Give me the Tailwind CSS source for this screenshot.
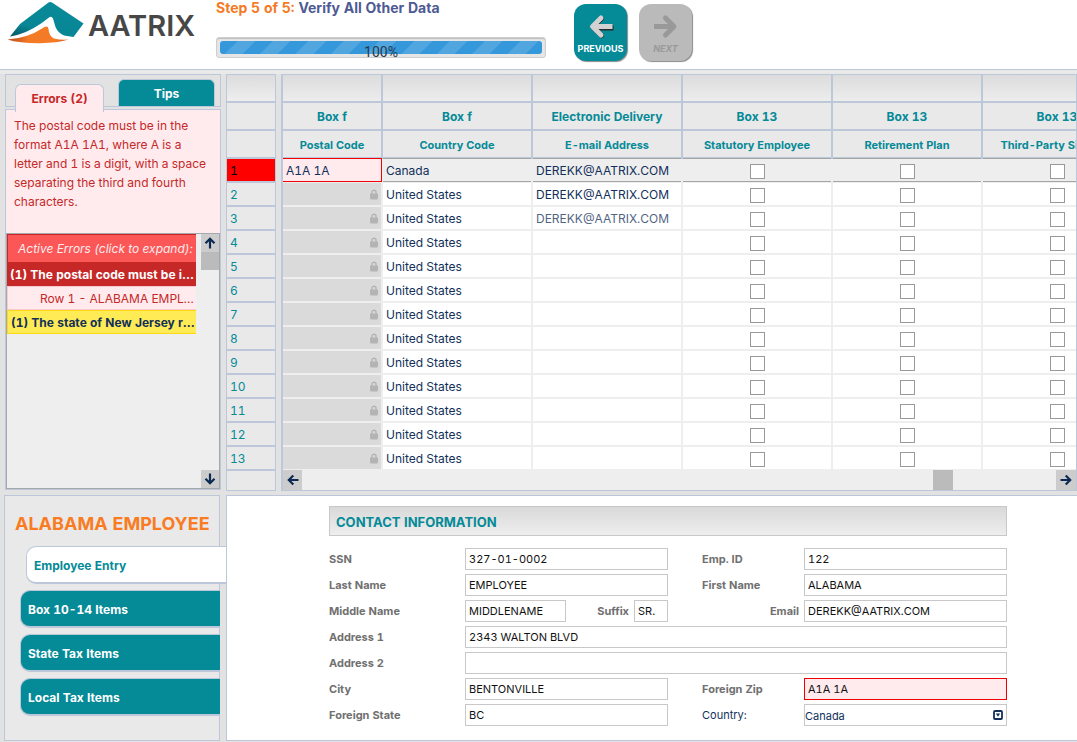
<!DOCTYPE html>
<html lang="en">
<head>
<meta charset="utf-8">
<title>Aatrix - Verify All Other Data</title>
<script src="https://cdn.jsdelivr.net/npm/@tailwindcss/browser@4"></script>
</head>
<body class="flex min-h-screen flex-col overflow-x-hidden bg-[#e2e2e2] font-['Inter',sans-serif] text-xs text-[#12305a] tabular-nums">

<header class="flex h-[70px] shrink-0 border-b border-[#bcc8da] bg-white">
  <div class="flex w-[216px] shrink-0">
    <svg class="ml-[6px] h-[48px] w-[80px] shrink-0" viewBox="6 0 80 48" aria-hidden="true">
      <defs>
        <linearGradient id="teal" x1="0" y1="1" x2="0.5" y2="0"><stop offset="0" stop-color="#04525f"/><stop offset="0.35" stop-color="#078796"/><stop offset="1" stop-color="#0a8a99"/></linearGradient>
        <linearGradient id="orange" x1="0" y1="0.5" x2="1" y2="0.5"><stop offset="0" stop-color="#b8481c"/><stop offset="0.35" stop-color="#f47b26"/><stop offset="0.8" stop-color="#f47b26"/><stop offset="1" stop-color="#c9531d"/></linearGradient>
      </defs>
      <path fill="url(#teal)" d="M10 36.5 L20 24 L48.500 2.600 Q50 1.500 52 2.600 L83.500 23.500 L73.500 37 L64 35.500 Q58 33 55.500 27 L53 18.500 Q51.500 15.500 49 17.500 L41 23.500 Q26 34 10 36.500Z"/>
      <path fill="url(#orange)" d="M7.500 39.500 Q28 38 42 28.500 Q48 24.500 48.500 29 Q49 36 54 38.500 Q60 40 68.500 39.600 Q58 43 40 43.300 Q20 43.500 7.500 39.500Z"/>
    </svg>
    <span class="mt-[10px] ml-[2px] text-[29px] leading-8 font-semibold text-[#474747]">AATRIX</span>
  </div>
  <div class="w-[330px] shrink-0">
    <h1 class="text-[14px] leading-4 font-bold text-[#4e5a94]"><span class="text-[#f47b26]">Step 5 of 5:</span> Verify All Other Data</h1>
    <div role="progressbar" aria-valuenow="100" aria-valuemin="0" aria-valuemax="100" class="relative mt-[21px] h-[21px] rounded-[3px] border border-[#cfcfcf] bg-[#e6e6e6] p-[3px] shadow-[inset_0_1px_1px_#bdbdbd]">
      <div class="h-[13px] rounded-[3px] bg-[repeating-linear-gradient(135deg,#3498db_0,#3498db_12px,#52a6e0_13px,#52a6e0_25px)]"></div>
      <span class="absolute inset-x-0 top-[6px] text-center font-['Roboto',sans-serif] text-sm leading-4 text-[#26384a]">100%</span>
    </div>
  </div>
  <nav class="ml-[28px] flex gap-3 pt-1">
    <button class="flex h-[57px] w-[53px] flex-col items-center justify-end gap-[3px] rounded-xl bg-[#058a98] pb-[6px] text-[9px] leading-3 font-bold text-white shadow-[1px_1px_1px_#8a8a8a]">
      <svg class="h-[26px] w-[28px]" viewBox="0 0 28 26" fill="none" stroke-linecap="round" stroke-linejoin="round" stroke-width="5"><path stroke="#2b2b2b" d="M14.500 4.500 L6 13 L14.500 21.500"/><path stroke="#2b2b2b" stroke-linecap="butt" d="M8 14 H26.500"/><path stroke="#d2d2d2" d="M14 4 L5.500 12.500 L14 21"/><path stroke="#d2d2d2" stroke-linecap="butt" d="M7 12.500 H25.500"/></svg>
      PREVIOUS</button>
    <button disabled class="flex h-[57px] w-[53px] flex-col items-center justify-end gap-[3px] rounded-xl bg-[#bababa] pb-[6px] text-[9px] leading-3 font-bold text-[#999] italic shadow-[1px_1px_1px_#8a8a8a]">
      <svg class="h-[26px] w-[28px]" viewBox="0 0 28 26" fill="none" stroke="#999" stroke-linecap="round" stroke-linejoin="round" stroke-width="5"><path d="M13.500 4 L22 12.500 L13.500 21"/><path stroke-linecap="butt" d="M2 12.500 H20.500"/></svg>
      NEXT</button>
  </nav>
</header>

<main class="flex grow flex-col">
  <section class="flex h-[425px] shrink-0 border-t-4 border-[#e9e9e9] bg-[#e2e2e2]">
    <aside class="ml-[5px] flex w-[216px] shrink-0 flex-col pb-[5px]">
      <div role="tablist" class="flex h-[33px] shrink-0 items-start border border-[#bcc8da]">
        <button role="tab" aria-selected="true" class="z-10 mt-[9px] ml-[9px] h-[28px] w-[89px] shrink-0 rounded-t-md border border-b-0 border-[#bcc8da] bg-[#ffebee] text-[12px] font-bold text-[#c62828]">Errors (2)</button>
        <button role="tab" aria-selected="false" class="mt-[4px] ml-[14px] h-[27px] w-[97px] shrink-0 rounded-t-md border border-b-0 border-[#bcc8da] bg-[#058a98] pt-[2px] text-[12px] font-bold text-white">Tips</button>
      </div>
      <div class="mt-[2px] flex grow flex-col border border-[#bcc8da] bg-[#ffebee]">
        <p class="h-[123px] px-2 pt-[6px] text-[12px] leading-[19px] text-[#c62828]">The postal code must be in the format A1A 1A1, where A is a letter and 1 is a digit, with a space separating the third and fourth characters.</p>
        <div class="flex grow border border-l-0 border-[#a5a8ac] bg-[#eee]">
          <ul class="w-[190px] shrink-0 border-l border-[#a5a8ac]">
            <li class="h-[28px] truncate border-t border-l border-[#c62828] bg-[#fa5756] pl-[10px] text-[12px] leading-[28px] text-[#ffebee] italic">Active Errors (click to expand):</li>
            <li class="h-6 truncate bg-[#c62828] pl-[3px] text-[12px] leading-[26px] font-bold text-white">(1) The postal code must be in the</li>
            <li class="h-6 truncate border border-r-0 border-[#f9c9cf] bg-[#ffebee] pl-8 text-[12px] leading-6 text-[#c62828]">Row 1 - ALABAMA EMPLOYEE</li>
            <li class="h-6 truncate border border-r-0 border-[#fbd913] bg-[#ffeb55] pl-[3px] text-[12px] leading-6 font-bold">(1) The state of New Jersey requires</li>
          </ul>
          <div class="ml-auto flex w-[18px] flex-col bg-[#eee]">
            <button aria-label="Scroll up" class="flex h-[18px] items-center justify-center bg-[#ccc]"><svg class="h-3 w-3" viewBox="0 0 12 12" fill="none" stroke="#0b2a52" stroke-width="2.200"><path d="M6 11.500 V2 M1.500 6.300 L6 1.800 L10.500 6.300"/></svg></button>
            <div class="h-[18px] bg-[#bbb]"></div>
            <button aria-label="Scroll down" class="mt-auto flex h-[18px] items-center justify-center bg-[#ccc]"><svg class="h-3 w-3" viewBox="0 0 12 12" fill="none" stroke="#0b2a52" stroke-width="2.200"><path d="M6 0.500 V10 M1.500 5.700 L6 10.200 L10.500 5.700"/></svg></button>
          </div>
        </div>
      </div>
    </aside>

    <div class="ml-[5px] w-[50px] shrink-0 self-start border border-[#bcc8da] bg-[#e9e9e9]">
      <div class="h-[28px] border-b-2 border-[#bcc8da] bg-linear-to-b from-[#dcdcdc] to-[#eee]"></div>
      <div class="h-[28px] border-b-2 border-[#bcc8da]"></div>
      <div class="h-[28px] border-b-2 border-[#bcc8da]"></div>
      <ol id="numbers" class="text-[12px] leading-5 text-[#058a98]"></ol>
      <div class="h-[19px]"></div>
    </div>

    <div class="ml-[5px] flex min-w-0 grow flex-col self-start overflow-hidden border border-l-2 border-[#bcc8da] bg-[#eee]">
      <div class="overflow-hidden">
        <table class="w-[850px] table-fixed border-separate border-spacing-0 leading-5">
          <colgroup><col class="w-[100px]"><col class="w-[150px]"><col class="w-[150px]"><col class="w-[150px]"><col class="w-[150px]"><col class="w-[150px]"></colgroup>
          <thead class="bg-[#e9e9e9] text-[#058a98]">
            <tr class="h-[28px] bg-linear-to-b from-[#dcdcdc] to-[#eee] *:border-r-2 *:border-b-2 *:border-[#bcc8da] *:p-0"><td></td><td></td><td></td><td></td><td></td><td></td></tr>
            <tr class="h-[28px] text-[12px] *:border-r-2 *:border-b-2 *:border-[#bcc8da] *:px-0 *:pt-[2px] *:pb-0 *:font-bold"><th>Box f</th><th>Box f</th><th>Electronic Delivery</th><th>Box 13</th><th>Box 13</th><th>Box 13</th></tr>
            <tr class="h-[28px] text-[11px] *:border-r-2 *:border-b-2 *:border-[#bcc8da] *:px-0 *:pt-[2px] *:pb-0 *:font-bold"><th>Postal Code</th><th>Country Code</th><th>E-mail Address</th><th>Statutory Employee</th><th>Retirement Plan</th><th>Third-Party Sick Pay</th></tr>
          </thead>
          <tbody id="rows" class="text-[12px]"></tbody>
        </table>
      </div>
      <div class="-mt-px flex h-5">
        <button aria-label="Scroll left" class="flex w-[19px] items-center justify-center bg-[#ccc]"><svg class="h-3 w-3" viewBox="0 0 12 12" fill="none" stroke="#0b2a52" stroke-width="2.200"><path d="M11.500 6 H2 M6.300 1.500 L1.800 6 L6.300 10.500"/></svg></button>
        <div class="flex-[631]"></div>
        <div class="w-5 bg-[#bbb]"></div>
        <div class="flex-[103]"></div>
        <button aria-label="Scroll right" class="flex w-5 items-center justify-center bg-[#ccc]"><svg class="h-3 w-3" viewBox="0 0 12 12" fill="none" stroke="#0b2a52" stroke-width="2.200"><path d="M0.500 6 H10 M5.700 1.500 L10.200 6 L5.700 10.500"/></svg></button>
      </div>
    </div>
  </section>

  <section class="flex grow pb-px">
    <aside class="ml-1 w-[216px] shrink-0 border border-[#bcc8da] bg-[#e9e9e9]">
      <h2 class="mt-4 ml-[10px] text-[18px] leading-6 font-bold whitespace-nowrap text-[#f97b22]">ALABAMA EMPLOYEE</h2>
      <nav class="mt-[10px] ml-[15px] flex flex-col gap-[6px] text-[12px] font-bold">
        <button class="z-10 -mr-[7px] ml-[6px] h-[38px] rounded-l-[10px] border border-r-0 border-b-2 border-[#bcc8da] bg-white pt-[2px] pl-[7px] text-left text-[#058a98]">Employee Entry</button>
        <button class="-mr-px h-[38px] rounded-l-[10px] border border-r-0 border-b-2 border-[#bcc8da] bg-[#058a98] pt-[2px] pl-[7px] text-left text-white">Box 10-14 Items</button>
        <button class="-mr-px h-[38px] rounded-l-[10px] border border-r-0 border-b-2 border-[#bcc8da] bg-[#058a98] pt-[2px] pl-[7px] text-left text-white">State Tax Items</button>
        <button class="-mr-px h-[38px] rounded-l-[10px] border border-r-0 border-b-2 border-[#bcc8da] bg-[#058a98] pt-[2px] pl-[7px] text-left text-white">Local Tax Items</button>
      </nav>
    </aside>

    <form class="ml-[6px] min-w-0 grow border border-r-0 border-[#bcc8da] bg-white pt-[10px] pr-[70px] pl-[102px] text-[11px] text-[#111]">
      <h3 class="h-[30px] border border-[#c8c8c8] bg-linear-to-b from-[#d9d9d9] to-[#eee] pl-[6px] text-[13px] leading-[31px] font-bold text-[#058a98]">CONTACT INFORMATION</h3>
      <div class="mt-3 grid grid-cols-[136px_1fr_34px_102px_1fr] gap-y-1 leading-[22px] [&_input]:h-[22px] [&_input]:min-w-0 [&_input]:border [&_input]:px-[3px] [&_label]:font-bold [&_label]:text-[#707070]">
        <label for="ssn">SSN</label><input id="ssn" class="border-[#c8c8c8]" value="327-01-0002">
        <label for="emp" class="col-start-4">Emp. ID</label><input id="emp" class="border-[#c8c8c8]" value="122">
        <label for="last">Last Name</label><input id="last" class="border-[#c8c8c8]" value="EMPLOYEE">
        <label for="first" class="col-start-4">First Name</label><input id="first" class="border-[#c8c8c8]" value="ALABAMA">
        <label for="middle">Middle Name</label>
        <div class="flex"><input id="middle" class="w-[101px] border-[#c8c8c8]" value="MIDDLENAME"><label for="suffix" class="mr-[5px] ml-auto">Suffix</label><input id="suffix" class="w-[34px] border-[#c8c8c8]" value="SR."></div>
        <label for="email" class="col-start-4 pr-[5px] text-right">Email</label><input id="email" class="border-[#c8c8c8]" value="DEREKK@AATRIX.COM">
        <label for="a1">Address 1</label><input id="a1" class="col-span-4 border-[#c8c8c8]" value="2343 WALTON BLVD">
        <label for="a2">Address 2</label><input id="a2" class="col-span-4 border-[#c8c8c8]">
        <label for="city">City</label><input id="city" class="border-[#c8c8c8]" value="BENTONVILLE">
        <label for="zip" class="col-start-4">Foreign Zip</label><input id="zip" aria-invalid="true" class="border-[#f00000] bg-[#ffebee]" value="A1A 1A">
        <label for="state">Foreign State</label><input id="state" class="border-[#c8c8c8]" value="BC">
        <label for="country" class="col-start-4"><span class="font-normal text-[#12305a]">Country:</span></label>
        <div class="relative">
          <select id="country" class="h-[22px] w-full appearance-none border border-[#c8c8c8] bg-white text-[#12305a]"><option>Canada</option><option>United States</option></select>
          <svg class="pointer-events-none absolute top-[6px] right-1 h-[10px] w-[10px]" viewBox="0 0 10 10"><rect x="1" y="1" width="8" height="8" rx="1" fill="#fff" stroke="#12305a" stroke-width="1.800"/><path d="M2.800 3.600 H7.200 L5 6.800Z" fill="#12305a"/></svg>
        </div>
      </div>
    </form>
  </section>
</main>

<script>
const lock = '<svg class="ml-auto mr-[3px] h-[11px] w-[8px]" viewBox="0 0 8 11"><path d="M2 5 V3.200 A2 2 0 0 1 6 3.200 V5" fill="none" stroke="#b4b4b4" stroke-width="1.400"/><rect y="4.600" width="8" height="5.800" rx="0.800" fill="#b4b4b4"/></svg>';
const emails = { 1: 'DEREKK@AATRIX.COM', 2: 'DEREKK@AATRIX.COM', 3: '<span class="opacity-75">DEREKK@AATRIX.COM</span>' };
let numbers = '', rows = '';
for (let n = 1; n <= 13; n++) {
  numbers += `<li class="h-6 border-b-2 border-[#bcc8da] ${n === 1 ? 'bg-[#f00] text-black' : ''} bg-clip-padding pt-[2px] pl-[3px]">${n}</li>`;
  const tone = n === 1 ? 'bg-[#eee] shadow-[0_1px_#a5a5a5,0_-1px_#a5a5a5]' : 'bg-white';
  const first = n === 1
    ? '<input aria-label="Postal Code, row 1" value="A1A 1A" class="relative block h-[22px] w-full bg-[#ffebee] px-[3px] outline outline-[#f00000]">'
    : `<div class="flex h-[22px] items-center bg-[#dadada]">${lock}</div>`;
  const box = name => `<td class="border-r-2 border-b-2 border-[#eee] p-0"><div class="flex h-[22px] items-end justify-center pb-[2px] pl-px ${tone}"><input type="checkbox" aria-label="${name}, row ${n}" class="h-[15px] w-[15px] appearance-none border border-[#999] bg-white"></div></td>`;
  rows += `<tr><td class="border-r-2 border-b-2 border-[#eee] p-0">${first}</td>`
    + `<td class="border-r-2 border-b-2 border-[#eee] p-0"><div class="h-[22px] pt-[2px] pl-[3px] ${tone}">${n === 1 ? 'Canada' : 'United States'}</div></td>`
    + `<td class="border-r-2 border-b-2 border-[#eee] p-0"><div class="h-[22px] pt-[2px] pl-[3px] ${tone}">${emails[n] || ''}</div></td>`
    + box('Statutory Employee') + box('Retirement Plan') + box('Third-Party Sick Pay') + '</tr>';
}
document.getElementById('numbers').innerHTML = numbers;
document.getElementById('rows').innerHTML = rows;
</script>
</body>
</html>
